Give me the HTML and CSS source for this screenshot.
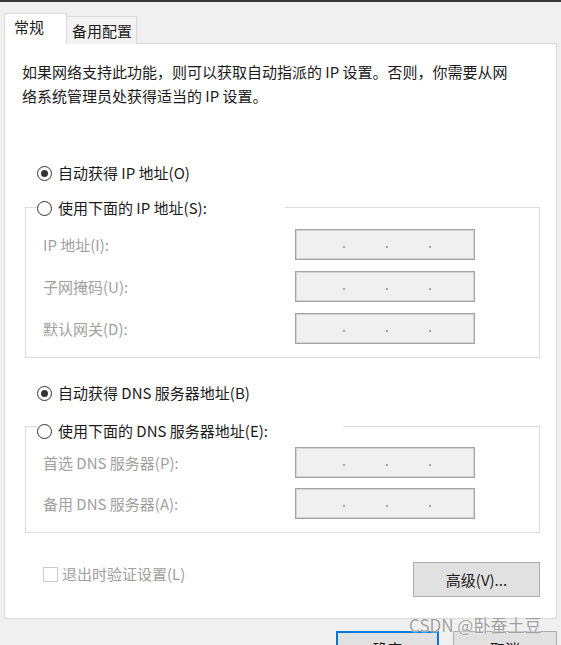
FILE: index.html
```
<!DOCTYPE html>
<html lang="zh-CN">
<head>
<meta charset="utf-8">
<title>Internet 协议版本 4 (TCP/IPv4) 属性</title>
<link rel="stylesheet" href="styles.css">
</head>
<body>
<div class="topline"></div>
<div class="tabs">
  <div class="tab active">常规</div>
  <div class="tab">备用配置</div>
</div>
<div class="panel">
  <p class="desc">如果网络支持此功能，则可以获取自动指派的 IP 设置。否则，你需要从网<br>络系统管理员处获得适当的 IP 设置。</p>

  <label class="radio-row first"><span class="radio checked"></span><span>自动获得 IP 地址(O)</span></label>

  <div class="group g1">
    <div class="group-head">
      <span class="seg-left"></span>
      <label class="radio-row legend"><span class="radio"></span><span>使用下面的 IP 地址(S):</span></label>
      <span class="seg-right"></span>
    </div>
    <div class="group-body">
      <div class="field"><span class="flabel">IP 地址(I):</span><div class="ipbox"><i></i><i></i><i></i></div></div>
      <div class="field"><span class="flabel">子网掩码(U):</span><div class="ipbox"><i></i><i></i><i></i></div></div>
      <div class="field"><span class="flabel">默认网关(D):</span><div class="ipbox"><i></i><i></i><i></i></div></div>
    </div>
  </div>

  <label class="radio-row third"><span class="radio checked"></span><span>自动获得 DNS 服务器地址(B)</span></label>

  <div class="group g2">
    <div class="group-head">
      <span class="seg-left"></span>
      <label class="radio-row legend"><span class="radio"></span><span>使用下面的 DNS 服务器地址(E):</span></label>
      <span class="seg-right"></span>
    </div>
    <div class="group-body">
      <div class="field"><span class="flabel">首选 DNS 服务器(P):</span><div class="ipbox"><i></i><i></i><i></i></div></div>
      <div class="field"><span class="flabel">备用 DNS 服务器(A):</span><div class="ipbox"><i></i><i></i><i></i></div></div>
    </div>
  </div>

  <div class="bottom-row">
    <label class="check-row"><span class="checkbox"></span><span>退出时验证设置(L)</span></label>
    <button class="btn adv">高级(V)...</button>
  </div>
</div>
<div class="dialog-buttons">
  <button class="btn ok">确定</button>
  <button class="btn cancel">取消</button>
</div>
<div class="watermark">CSDN @卧蚕土豆</div>
</body>
</html>
```
FILE: styles.css
```
* { box-sizing: border-box; }
html, body { margin: 0; padding: 0; }
body {
  position: relative;
  width: 561px;
  height: 645px;
  overflow: hidden;
  background: #f0f0f0;
  font-family: "Noto Sans CJK SC", "Noto Sans", sans-serif;
  font-size: 15px;
  color: #1a1a1a;
}
.topline { height: 2px; background: #3a3a3a; }

.tabs {
  display: flex;
  align-items: flex-end;
  margin-top: 11px;
  padding-left: 4px;
  margin-bottom: -1px;
  position: relative;
  z-index: 1;
}
.tab {
  height: 28px;
  width: 70px;
  border: 1px solid #d9d9d9;
  border-left: none;
  border-bottom: none;
  background: #f3f3f3;
  padding-left: 5px;
  line-height: 28px;
  color: #1a1a1a;
}
.tab.active {
  height: 31px;
  width: 63px;
  border-left: 1px solid #d9d9d9;
  background: #fff;
  padding-left: 9px;
  line-height: 26px;
}

.panel {
  margin-left: 4px;
  width: 553px;
  background: #fff;
  border: 1px solid #d9d9d9;
  padding: 16px 0 21px 0;
}
.desc {
  margin: 0;
  padding-left: 17px;
  line-height: 24px;
  color: #1a1a1a;
}

.radio-row {
  display: flex;
  align-items: center;
  height: 24px;
  line-height: 24px;
  gap: 6px;
  white-space: nowrap;
}
.radio-row.first { margin: 53px 0 0 32px; }
.radio-row.third { margin: 23px 0 0 32px; }
.radio {
  width: 15px;
  height: 15px;
  border: 1px solid #333;
  border-radius: 50%;
  display: flex;
  align-items: center;
  justify-content: center;
  flex: none;
}
.radio.checked::after {
  content: "";
  width: 7px;
  height: 7px;
  border-radius: 50%;
  background: #333;
}

.group { margin-left: 20px; width: 515px; }
.g1 { margin-top: 11px; }
.g2 { margin-top: 14px; }
.group-head { display: flex; height: 24px; }
.seg-left {
  width: 12px;
  border-top: 1px solid #dcdcdc;
  border-left: 1px solid #dcdcdc;
  flex: none;
}
.seg-right {
  flex: 1;
  border-top: 1px solid #dcdcdc;
  border-right: 1px solid #dcdcdc;
}
.g1 .seg-left, .g1 .seg-right { margin-top: 11px; }
.g2 .seg-left, .g2 .seg-right { margin-top: 7px; }
.g1 .legend { width: 248px; }
.g2 .legend { width: 306px; }

.group-body {
  border: 1px solid #dcdcdc;
  border-top: none;
  padding-left: 17px;
  display: flex;
  flex-direction: column;
}
.g1 .group-body { padding-top: 9px; padding-bottom: 13px; gap: 11px; }
.g2 .group-body { padding-top: 4px; padding-bottom: 13px; gap: 10px; }

.field { display: flex; align-items: center; height: 31px; }
.flabel { width: 252px; color: #a0a0a0; line-height: 24px; white-space: nowrap; }
.ipbox {
  width: 180px;
  height: 31px;
  border: 1px solid #a3a3a3;
  box-shadow: inset 0 0 0 1px #d4d4d4;
  background: #f0f0f0;
  display: flex;
  align-items: center;
  padding-left: 47px;
  gap: 41px;
}
.ipbox i {
  display: block;
  width: 2px;
  height: 2px;
  border-radius: 50%;
  background: #8a8a8a;
  margin-top: 5px;
}

.bottom-row {
  display: flex;
  justify-content: space-between;
  align-items: flex-start;
  margin-top: 29px;
  padding-left: 38px;
  padding-right: 16px;
}
.check-row {
  display: flex;
  align-items: center;
  gap: 4px;
  height: 24px;
  line-height: 24px;
  color: #a0a0a0;
}
.checkbox {
  width: 15px;
  height: 15px;
  border: 1px solid #cccccc;
  background: #fff;
}
.btn {
  font-family: inherit;
  font-size: 15px;
  color: #1a1a1a;
  background: #e1e1e1;
  border: 1px solid #adadad;
  padding: 0;
  height: 35px;
  line-height: 31px;
}
.adv { width: 127px; }

.dialog-buttons {
  display: flex;
  justify-content: flex-end;
  gap: 14px;
  margin-top: 12px;
  padding-right: 4px;
}
.ok { width: 103px; border: 2px solid #0078d7; }
.cancel { width: 104px; }

.watermark {
  position: absolute;
  left: 409px;
  top: 613px;
  font-size: 17px;
  line-height: 24px;
  color: #9e9e9e;
  text-shadow: 0 0 2px #fff, 0 0 1px #fff;
  white-space: nowrap;
  font-family: "Noto Sans CJK SC", "Noto Sans", sans-serif;
}
```
